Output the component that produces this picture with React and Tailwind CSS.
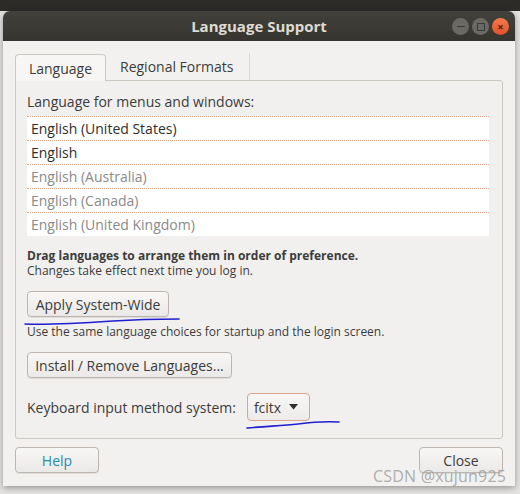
import React from "react";

const langs = [
  { name: "English (United States)", active: true },
  { name: "English", active: true },
  { name: "English (Australia)", active: false },
  { name: "English (Canada)", active: false },
  { name: "English (United Kingdom)", active: false },
];

function GtkButton({ children, className = "", color = "text-[#3c3c3c]" }) {
  return (
    <button
      className={
        "h-[26px] rounded-[4px] border border-[#bdb6b0] bg-gradient-to-b from-[#f8f7f6] to-[#ebe9e7] text-[14px] shadow-[0_1px_0_rgba(0,0,0,0.08)] " +
        color +
        " " +
        className
      }
    >
      {children}
    </button>
  );
}

export default function App() {
  return (
    <div
      className="relative w-[520px] h-[494px] overflow-hidden bg-[#e4e3e1]"
      style={{ fontFamily: '"Open Sans", "Noto Sans", sans-serif' }}
    >
      {/* desktop strip behind the dialog */}
      <div className="h-[11px] bg-[#2c2b28]" />

      <div className="ml-[3px] w-[512px] rounded-t-[7px] shadow-[0_2px_6px_rgba(0,0,0,0.35)] overflow-hidden">
        {/* title bar */}
        <div className="relative h-[30px] bg-gradient-to-b from-[#42413c] to-[#35342f] flex items-center justify-center">
          <span className="text-[15px] font-bold text-[#dfdbd2]">Language Support</span>
          <div className="absolute right-[6px] top-[7px] flex gap-[3px]">
            <div className="w-[17px] h-[17px] rounded-full bg-[#6a6964] flex items-center justify-center">
              <div className="w-[8px] h-[1.5px] bg-[#3b3a36]" />
            </div>
            <div className="w-[17px] h-[17px] rounded-full bg-[#6a6964] flex items-center justify-center">
              <div className="w-[8px] h-[8px] border border-[#3b3a36]" />
            </div>
            <div className="w-[17px] h-[17px] rounded-full bg-gradient-to-b from-[#f37a4a] to-[#e0512a] flex items-center justify-center text-[#4a2012] text-[11px] leading-none font-bold">
              ×
            </div>
          </div>
        </div>

        {/* body */}
        <div className="bg-[#f2f1f0] h-[445px] px-[12px] pt-[12px]">
          {/* tabs */}
          <div className="flex h-[27px] items-end">
            <div className="h-[27px] w-[91px] rounded-t-[4px] border border-b-0 border-[#cdc7c2] bg-[#f7f6f5] flex items-center justify-center text-[14px] text-[#3c3c3c] relative z-10 -mb-px">
              Language
            </div>
            <div className="h-[27px] pl-[14px] pr-[16px] flex items-center text-[14px] text-[#3c3c3c] border-r border-[#dcd8d4]">
              Regional Formats
            </div>
          </div>

          {/* notebook page */}
          <div className="h-[359px] w-[488px] border border-[#cdc7c2] rounded-b-[3px] rounded-tr-[3px] bg-[#f1f0ef] px-[11px] pt-[12px]">
            <div className="text-[14px] text-[#3c3c3c] leading-[18px]">Language for menus and windows:</div>
            <div className="mt-[5px] w-[462px] bg-white">
              {langs.map((l) => (
                <div
                  key={l.name}
                  className={
                    "h-[24px] border-t border-dotted border-[#e0a58a] px-[4px] flex items-center text-[14px] " +
                    (l.active ? "text-[#2e2e2e]" : "text-[#8a8a8a]")
                  }
                >
                  {l.name}
                </div>
              ))}
            </div>

            <div className="mt-[12px] text-[12px] font-bold text-[#3c3c3c] leading-[15px]">
              Drag languages to arrange them in order of preference.
            </div>
            <div className="text-[12px] text-[#3c3c3c] leading-[15px]">Changes take effect next time you log in.</div>

            <div className="relative mt-[13px]">
              <GtkButton className="w-[142px]">Apply System-Wide</GtkButton>
              <svg className="absolute left-[-4px] top-[24px]" width="160" height="12" viewBox="0 0 160 12">
                <path d="M2 9 C30 10, 60 8, 90 6 S140 4, 156 4" stroke="#1f1fd0" strokeWidth="1.6" fill="none" strokeLinecap="round" />
              </svg>
            </div>
            <div className="mt-[7px] text-[12px] text-[#3c3c3c] leading-[15px]">
              Use the same language choices for startup and the login screen.
            </div>

            <div className="mt-[13px]">
              <GtkButton className="w-[205px]">Install / Remove Languages...</GtkButton>
            </div>

            <div className="relative mt-[15px] flex items-center">
              <span className="text-[14px] text-[#3c3c3c]">Keyboard input method system:</span>
              <div className="ml-[11px] h-[28px] w-[63px] rounded-[4px] border border-[#d9a58c] bg-gradient-to-b from-[#f8f7f6] to-[#ecebe9] flex items-center pl-[6px] gap-[8px] text-[14px] text-[#3c3c3c]">
                fcitx
                <svg width="9" height="6" viewBox="0 0 9 6">
                  <path d="M0 0 L9 0 L4.5 5.5 Z" fill="#2e2e2e" />
                </svg>
              </div>
              <svg className="absolute left-[216px] top-[24px]" width="100" height="14" viewBox="0 0 100 14">
                <path d="M4 11 C25 9, 40 9, 55 7 S80 4, 96 5" stroke="#1f1fd0" strokeWidth="1.6" fill="none" strokeLinecap="round" />
              </svg>
            </div>
          </div>

          {/* bottom buttons */}
          <div className="mt-[8px] flex justify-between">
            <GtkButton className="w-[84px]" color="text-[#2a8ab0]">Help</GtkButton>
            <GtkButton className="w-[84px]">Close</GtkButton>
          </div>
        </div>
      </div>

      {/* watermark */}
      <div className="absolute left-[373px] top-[464px] text-[16px] text-[#9a9a9a]/80 tracking-[0.2px]">CSDN @xujun925</div>
    </div>
  );
}
